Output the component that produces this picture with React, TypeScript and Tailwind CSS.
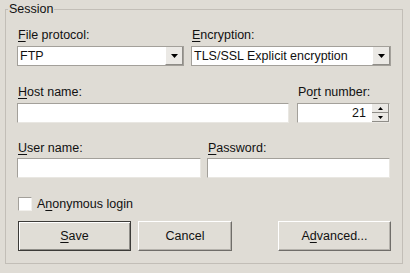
import { ReactNode } from 'react';

function Key({ children }: { children: ReactNode }) {
  return <span className="underline underline-offset-[2px]">{children}</span>;
}

function Label({ children, className = '' }: { children: ReactNode; className?: string }) {
  return <div className={`h-[16px] leading-[16px] ${className}`}>{children}</div>;
}

function TextBox({ className = '', children }: { className?: string; children?: ReactNode }) {
  return (
    <div
      className={`h-[20px] bg-white border-t border-l border-t-[#a3a09a] border-l-[#a3a09a] border-b border-r border-b-[#e9e7e2] border-r-[#e9e7e2] flex items-center ${className}`}
    >
      {children}
    </div>
  );
}

function Arrow({ up = false, small = false }: { up?: boolean; small?: boolean }) {
  const w = small ? 5 : 7;
  const h = small ? 3 : 4;
  return (
    <svg width={w} height={h} viewBox={`0 0 ${w} ${h}`}>
      <polygon points={up ? `${w / 2},0 ${w},${h} 0,${h}` : `0,0 ${w},0 ${w / 2},${h}`} fill="#000" />
    </svg>
  );
}

function Select({ value, className = '' }: { value: string; className?: string }) {
  return (
    <div className={`h-[20px] bg-white border border-[#a3a09a] flex ${className}`}>
      <div className="flex-1 pl-[2px] leading-[18px]">{value}</div>
      <div className="w-[18px] h-full bg-[#ebe9e5] border-l border-l-[#ffffff] border-r border-b border-r-[#8f8d88] border-b-[#8f8d88] flex items-center justify-center">
        <Arrow />
      </div>
    </div>
  );
}

function Button({ children, primary = false, className = '' }: { children: ReactNode; primary?: boolean; className?: string }) {
  return (
    <div
      className={`h-[30px] flex items-center justify-center ${
        primary
          ? 'border border-[#3c3b38] shadow-[inset_1px_1px_0_#ffffff,inset_-1px_-1px_0_#8f8d88]'
          : 'border-t border-l border-t-[#ffffff] border-l-[#ffffff] border-b border-r border-b-[#6f6d69] border-r-[#6f6d69] shadow-[inset_-1px_-1px_0_#b5b2ac]'
      } bg-[#e0ddd6] ${className}`}
    >
      {children}
    </div>
  );
}

export default function App() {
  return (
    <div
      className="w-[410px] h-[273px] bg-[#dfdcd5] pt-[9px] px-[5px] text-[12.5px] text-[#111]"
      style={{ fontFamily: '"Liberation Sans", Arial, sans-serif' }}
    >
      <div className="relative w-[398px] h-[255px] border border-[#c2beb7] pl-[11px] pr-[11px] pt-[17px]">
        <span className="absolute left-[2px] top-[-9px] px-[1px] bg-[#dfdcd5] leading-[16px]">Session</span>

        <div className="flex gap-[7px]">
          <div className="w-[167px]">
            <Label className="pl-[1px]"><Key>F</Key>ile protocol:</Label>
            <Select value="FTP" className="mt-[3px]" />
          </div>
          <div className="w-[200px]">
            <Label className="pl-[1px]"><Key>E</Key>ncryption:</Label>
            <Select value="TLS/SSL Explicit encryption" className="mt-[3px]" />
          </div>
        </div>

        <div className="flex gap-[8px] mt-[18px]">
          <div className="w-[272px]">
            <Label className="pl-[1px]"><Key>H</Key>ost name:</Label>
            <TextBox className="mt-[3px]" />
          </div>
          <div className="w-[93px]">
            <Label className="pl-[1px]">Po<Key>r</Key>t number:</Label>
            <TextBox className="mt-[3px] justify-end">
              <span className="pr-[6px] leading-[18px]">21</span>
              <div className="w-[17px] h-full flex flex-col">
                <div className="flex-1 bg-[#ebe9e5] border-r border-b border-r-[#8f8d88] border-b-[#8f8d88] flex items-center justify-center">
                  <Arrow up small />
                </div>
                <div className="flex-1 bg-[#ebe9e5] border-r border-b border-r-[#8f8d88] border-b-[#8f8d88] flex items-center justify-center">
                  <Arrow small />
                </div>
              </div>
            </TextBox>
          </div>
        </div>

        <div className="flex gap-[6px] mt-[17px]">
          <div className="w-[184px]">
            <Label className="pl-[1px]"><Key>U</Key>ser name:</Label>
            <TextBox className="mt-[2px]" />
          </div>
          <div className="w-[183px]">
            <Label className="pl-[1px]"><Key>P</Key>assword:</Label>
            <TextBox className="mt-[2px]" />
          </div>
        </div>

        <div className="flex items-center gap-[5px] mt-[18px] pl-[1px]">
          <div className="w-[14px] h-[14px] bg-white border-t border-l border-t-[#a3a09a] border-l-[#a3a09a] border-b border-r border-b-[#f2f0ec] border-r-[#f2f0ec]" />
          <span className="leading-[16px]">A<Key>n</Key>onymous login</span>
        </div>

        <div className="flex mt-[9px] pl-[1px]">
          <Button primary className="w-[113px]"><Key>S</Key>ave</Button>
          <Button className="w-[94px] ml-[7px]">Cancel</Button>
          <Button className="w-[113px] ml-[46px]">A<Key>d</Key>vanced...</Button>
        </div>
      </div>
    </div>
  );
}
